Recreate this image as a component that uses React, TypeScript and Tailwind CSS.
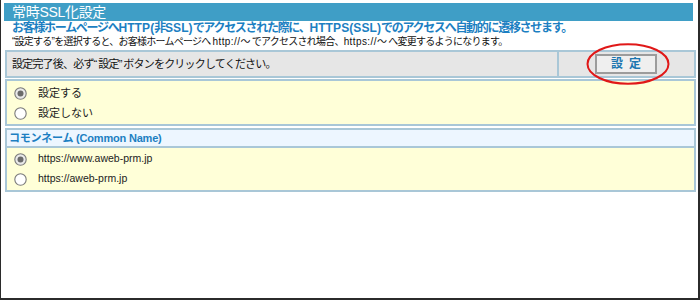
import React from "react";

const jp = { fontFamily: '"Liberation Sans", "Noto Sans CJK JP", sans-serif' };

function Radio({ checked }: { checked?: boolean }) {
  return (
    <svg width="13" height="13" viewBox="0 0 13 13" className="shrink-0">
      <circle cx="6.5" cy="6.5" r="5.7" fill={checked ? "#e9e9e9" : "#fff"} stroke="#7a7a7a" strokeWidth="1.1" />
      {checked && <circle cx="6.5" cy="6.5" r="3" fill="#6a6a6a" />}
    </svg>
  );
}

function RadioRow({ label, checked, mono }: { label: string; checked?: boolean; mono?: boolean }) {
  return (
    <div className="flex items-center h-[20px] pl-[7px]">
      <Radio checked={checked} />
      <span className={mono ? "ml-[11px] text-[10.5px] text-[#222]" : "ml-[11px] text-[11px] text-[#222]"}>
        {label}
      </span>
    </div>
  );
}

export default function App() {
  return (
    <div className="relative w-[700px] h-[300px] bg-white border-l border-r-2 border-b-2 border-[#2b2b2b] overflow-hidden" style={jp}>
      <div className="mt-[3px] ml-[3px] w-[689px] h-[18px] bg-[#3f9ec6] flex items-center pl-[8px]">
        <span className="text-white text-[14px] leading-[16px] tracking-[-0.3px]">常時SSL化設定</span>
      </div>
      <div className="ml-[11px] mt-[1px] text-[12px] leading-[13px] font-bold text-[#1c7fc2] tracking-[-1.3px] whitespace-nowrap">
        お客様ホームページへ<span className="tracking-[0.1px]">HTTP(</span>非<span className="tracking-[0.1px]">SSL)</span>でアクセスされた際に、<span className="tracking-[0.1px]">HTTPS(SSL)</span>でのアクセスへ自動的に遷移させます。
      </div>
      <div className="ml-[11px] mt-[1px] text-[10px] leading-[12px] text-[#111] tracking-[-0.75px] whitespace-nowrap">
        “設定する”を選択すると、お客様ホームページへ <span className="tracking-[0.4px]">http://</span>～ でアクセスされ場合、<span className="tracking-[0.4px]">https://</span>～ へ変更するようになります。
      </div>
      <div className="ml-[4px] mt-[2px] w-[691px] flex flex-col gap-[1px]">
        <div className="h-[28px] flex bg-[#e6e6e6] border-2 border-[#a9c7d7]">
          <div className="flex-1 flex items-center pl-[5px] text-[11px] text-[#111] tracking-[-0.8px] border-r-2 border-[#a9c7d7] whitespace-pre">
            設定完了後、必ず<span className="tracking-[1px]">“</span>設定<span className="tracking-[1px]">”</span>ボタンをクリックしてください。
          </div>
          <div className="w-[135px] flex items-center pl-[36px]">
            <button className="w-[62px] h-[20px] bg-[#efefef] border-2 border-[#9c9c9c] text-[#1b76b0] font-bold text-[12px] leading-none tracking-[6px] pl-[6px]">
              設定
            </button>
          </div>
        </div>
        <div className="h-[47px] bg-[#ffffd8] border-2 border-[#a9c7d7] flex flex-col justify-center pt-[1px]">
          <RadioRow label="設定する" checked />
          <RadioRow label="設定しない" />
        </div>
      </div>
      <div className="ml-[4px] mt-[2px] w-[691px] flex flex-col">
        <div className="h-[18px] bg-[#edf6ff] border-2 border-b-0 border-[#a9c7d7] flex items-center pl-[2px]">
          <span className="text-[11px] font-bold text-[#1c7fc2] tracking-[-0.2px]">コモンネーム (Common Name)</span>
        </div>
        <div className="h-[46px] bg-[#ffffd8] border-2 border-[#a9c7d7] flex flex-col justify-center">
          <RadioRow label="https://www.aweb-prm.jp" checked mono />
          <RadioRow label="https://aweb-prm.jp" mono />
        </div>
      </div>
      <svg className="absolute left-[584px] top-[42px]" width="86" height="44" viewBox="0 0 86 44">
        <ellipse cx="43" cy="22" rx="40.5" ry="19.8" fill="none" stroke="#e01818" strokeWidth="2" />
      </svg>
    </div>
  );
}
